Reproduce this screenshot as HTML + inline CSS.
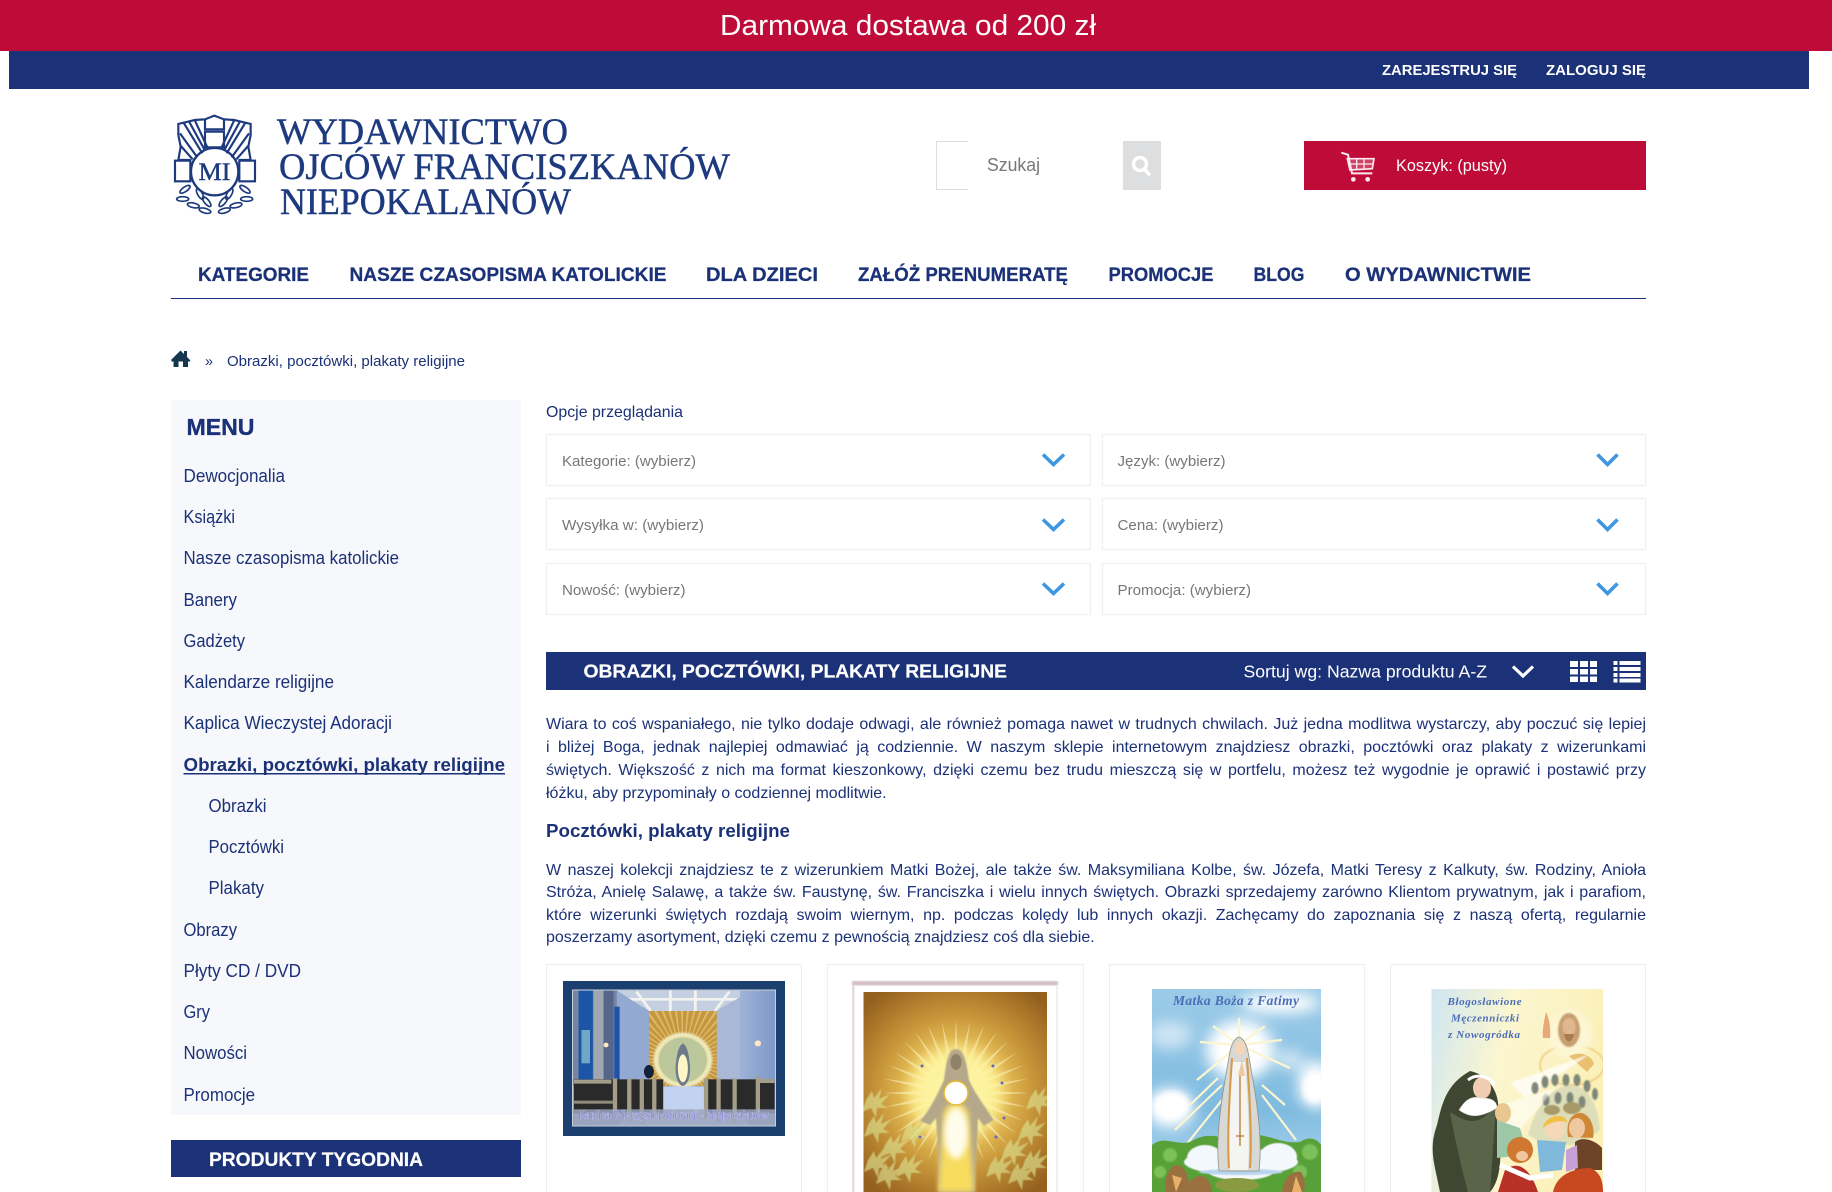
<!DOCTYPE html>
<html lang="pl"><head><meta charset="utf-8"><title>Obrazki, pocztówki, plakaty religijne</title>
<style>
html,body{margin:0;padding:0;background:#fff;width:1832px;height:1192px;overflow:hidden}
#p{position:relative;width:1832px;height:1192px;overflow:hidden}
svg{position:absolute;left:0;top:0;display:block;overflow:hidden}
text{font-family:"Liberation Sans",sans-serif}
.b{font-weight:700}
.w{fill:#fff}
.n{fill:#1b3178}
.g{fill:#777}
.m{font-size:18px;fill:#1b3178}
.nv{font-size:19.5px;font-weight:700;fill:#1b3178;stroke:#1b3178;stroke-width:.25px}
.f{font-size:15px;fill:#777}
.sf{font-family:"Liberation Serif",serif}
.ln{position:absolute;left:546px;width:1100px;height:22px;white-space:nowrap;text-align:justify;text-align-last:justify;font:16px/22px "Liberation Sans",sans-serif;color:#1b3178}
.l{text-align:left;text-align-last:left}
</style></head><body><div id="p">
<svg width="1832" height="1192" viewBox="0 0 1832 1192" xmlns="http://www.w3.org/2000/svg">
<defs>
<filter id="bl"><feGaussianBlur stdDeviation="0.7"/></filter>
<filter id="bs"><feGaussianBlur stdDeviation="0.45"/></filter>
<filter id="bl2"><feGaussianBlur stdDeviation="3"/></filter>
<filter id="bl3"><feGaussianBlur stdDeviation="7"/></filter>
<clipPath id="c1"><rect x="572.5" y="990" width="203" height="136"/></clipPath>
<clipPath id="cw"><rect x="305" y="183" width="190" height="225"/></clipPath>
<clipPath id="c2"><rect x="863.5" y="992" width="183.5" height="200"/></clipPath>
<clipPath id="c3"><rect x="1152" y="989" width="169" height="203"/></clipPath>
<clipPath id="c4"><rect x="1431.5" y="989" width="171.5" height="203"/></clipPath>
<linearGradient id="s4" x1="0" x2="1" y1="0" y2="0.3"><stop offset="0" stop-color="#cfe6f2"/><stop offset=".45" stop-color="#fbf6d0"/><stop offset="1" stop-color="#fbf0b8"/></linearGradient>
<linearGradient id="s3" x1="0" x2="0" y1="0" y2="1"><stop offset="0" stop-color="#9ccbe8"/><stop offset=".6" stop-color="#7fbbe0"/><stop offset="1" stop-color="#bcdcf0"/></linearGradient>
<linearGradient id="wl" x1="0" x2="1" y1="0" y2="0"><stop offset="0" stop-color="#9fb2d8"/><stop offset="1" stop-color="#7f98c8"/></linearGradient>
<radialGradient id="gold" gradientUnits="userSpaceOnUse" cx="956" cy="1093" r="125"><stop offset="0" stop-color="#fff7a0"/><stop offset=".32" stop-color="#eecb5e"/><stop offset=".62" stop-color="#c8963a"/><stop offset="1" stop-color="#94601e"/></radialGradient>
<polygon id="sp0" points="952,1093 960,1093 956,1020" fill="#f5e6ac" opacity=".7"/>
<g id="sp1"><use href="#sp0"/><use href="#sp0" transform="rotate(180 956 1093)"/></g>
<g id="sp2"><use href="#sp1"/><use href="#sp1" transform="rotate(90 956 1093)"/></g>
<g id="sp3"><use href="#sp2"/><use href="#sp2" transform="rotate(45 956 1093)"/></g>
<g id="sp4"><use href="#sp3"/><use href="#sp3" transform="rotate(22.5 956 1093)"/></g>
<g id="sp5"><use href="#sp4"/><use href="#sp4" transform="rotate(11.25 956 1093)"/></g>
<g id="lf"><ellipse cx="0" cy="0" rx="18" ry="7" fill="none" stroke="#1e3a7f" stroke-width="5"/></g>
<path id="pl" d="M0 0L6 -9L8 -2L16 -12L13 -1L24 -6L15 4L22 8L11 8L10 18L5 8L-4 12Z" fill="#dde494"/>
</defs>

<!-- top bars -->
<rect x="0" y="0" width="1832" height="51" fill="#bf0b38"/>
<rect x="9" y="51" width="1800" height="38" fill="#1b3178"/>
<text x="720" y="35" font-size="29" class="w" textLength="376" lengthAdjust="spacingAndGlyphs">Darmowa dostawa od 200 zł</text>
<text x="1382" y="75" font-size="15" class="w b" textLength="135" lengthAdjust="spacingAndGlyphs">ZAREJESTRUJ SIĘ</text>
<text x="1546" y="75" font-size="15" class="w b" textLength="100" lengthAdjust="spacingAndGlyphs">ZALOGUJ SIĘ</text>

<!-- logo emblem -->
<g transform="translate(160 100) scale(.3333)" fill="none" stroke="#1e3a7f" stroke-width="6.500">
<path d="M55 105L55 72L105 60L135 58L163 47L192 58L222 60L272 72L272 105L265 140L272 180L236 180M55 105L62 140L55 180L92 180"/>
<rect x="135" y="95" width="57" height="47"/>
<path d="M135 58V88H192V58"/>
<path d="M72 70L127 160M105 62L142 142M88 66L134 150M60 100L112 172M60 135L98 178M255 70L200 160M222 62L185 142M239 66L193 150M267 100L215 172M267 135L229 178"/>
<circle cx="164" cy="215" r="71" stroke-width="7"/>
<rect x="45" y="182" width="46" height="62"/><rect x="238" y="182" width="47" height="62"/>
<use href="#lf" transform="translate(75 268) rotate(-35)"/><use href="#lf" transform="translate(68 297)"/>
<use href="#lf" transform="translate(100 316) rotate(12)"/><use href="#lf" transform="translate(120 282) rotate(60)"/><use href="#lf" transform="translate(140 305) rotate(50)"/>
<use href="#lf" transform="translate(135 332) rotate(15)"/><use href="#lf" transform="translate(255 268) rotate(35)"/>
<use href="#lf" transform="translate(260 297)"/><use href="#lf" transform="translate(228 316) rotate(-12)"/><use href="#lf" transform="translate(208 282) rotate(-60)"/>
<use href="#lf" transform="translate(190 305) rotate(-50)"/><use href="#lf" transform="translate(193 332) rotate(-15)"/>
</g>
<text x="198.500" y="180" class="sf" font-size="25" fill="#1e3a7f" stroke="#1e3a7f" stroke-width=".4" textLength="32" lengthAdjust="spacingAndGlyphs">MI</text>
<g fill="#1e3a7f" stroke="#1e3a7f" stroke-width=".45" font-size="37">
<text x="277" y="144" class="sf" textLength="291" lengthAdjust="spacingAndGlyphs">WYDAWNICTWO</text>
<text x="279" y="179" class="sf" textLength="451" lengthAdjust="spacingAndGlyphs">OJCÓW FRANCISZKANÓW</text>
<text x="280" y="214" class="sf" textLength="291" lengthAdjust="spacingAndGlyphs">NIEPOKALANÓW</text>
</g>

<!-- search -->
<path d="M968 141.500H936.500V189.500H968" fill="none" stroke="#ddd"/>
<text x="987" y="171" font-size="18" class="g" textLength="53" lengthAdjust="spacingAndGlyphs">Szukaj</text>
<rect x="1123" y="141" width="38" height="49" fill="#dddee0"/>
<circle cx="1140" cy="164" r="6.500" fill="none" stroke="#fff" stroke-width="3.400"/>
<path d="M1144.500 169L1150 175.500" stroke="#fff" stroke-width="3.600"/>

<!-- cart -->
<rect x="1304" y="141" width="342" height="49" fill="#bf0b38"/>
<g transform="translate(1300 130) scale(.3333)" fill="none" stroke="#fde8ee" stroke-width="5">
<path d="M124 68L144 74L156 130H217" stroke-width="6"/>
<path d="M142 86H222L217 116L150 120Z" fill="#fde8ee" fill-opacity=".25"/>
<path d="M147 102H220M170 86V118M192 86V117" stroke-width="4"/>
<circle cx="160" cy="148" r="7" fill="#fde8ee" stroke="none"/><circle cx="203" cy="148" r="7" fill="#fde8ee" stroke="none"/>
</g>
<text x="1396" y="171" font-size="17" class="w" textLength="111" lengthAdjust="spacingAndGlyphs">Koszyk: (pusty)</text>

<!-- nav -->
<text x="198" y="281" class="nv" textLength="111" lengthAdjust="spacingAndGlyphs">KATEGORIE</text>
<text x="349.500" y="281" class="nv" textLength="317" lengthAdjust="spacingAndGlyphs">NASZE CZASOPISMA KATOLICKIE</text>
<text x="706" y="281" class="nv" textLength="112" lengthAdjust="spacingAndGlyphs">DLA DZIECI</text>
<text x="858" y="281" class="nv" textLength="210" lengthAdjust="spacingAndGlyphs">ZAŁÓŻ PRENUMERATĘ</text>
<text x="1108.500" y="281" class="nv" textLength="105" lengthAdjust="spacingAndGlyphs">PROMOCJE</text>
<text x="1253.500" y="281" class="nv" textLength="51" lengthAdjust="spacingAndGlyphs">BLOG</text>
<text x="1345" y="281" class="nv" textLength="186" lengthAdjust="spacingAndGlyphs">O WYDAWNICTWIE</text>
<rect x="171" y="298" width="1475" height="1" fill="#1b3178"/>

<!-- breadcrumb -->
<path d="M171 360L180.500 350.500L184 354V351H187V357L190.500 360.500L189 362L188 361V367H183V361.500H178.500V367H173.500V361L172.300 362Z" fill="#16384f"/>
<text x="205" y="366" font-size="15" class="n" textLength="8" lengthAdjust="spacingAndGlyphs">»</text>
<text x="227" y="366" font-size="15" class="n" textLength="238" lengthAdjust="spacingAndGlyphs">Obrazki, pocztówki, plakaty religijne</text>

<!-- sidebar -->
<rect x="171" y="400" width="350" height="715" fill="#f7f8fb"/>
<text x="186.500" y="435" font-size="23" class="b n" stroke="#1b3178" stroke-width=".35" textLength="68" lengthAdjust="spacingAndGlyphs">MENU</text>
<text x="183.500" y="482" class="m" textLength="101.500" lengthAdjust="spacingAndGlyphs">Dewocjonalia</text>
<text x="183.500" y="523" class="m" textLength="51.500" lengthAdjust="spacingAndGlyphs">Książki</text>
<text x="183.500" y="564" class="m" textLength="215.500" lengthAdjust="spacingAndGlyphs">Nasze czasopisma katolickie</text>
<text x="183.500" y="606" class="m" textLength="53.500" lengthAdjust="spacingAndGlyphs">Banery</text>
<text x="183.500" y="647" class="m" textLength="61.500" lengthAdjust="spacingAndGlyphs">Gadżety</text>
<text x="183.500" y="688" class="m" textLength="150.500" lengthAdjust="spacingAndGlyphs">Kalendarze religijne</text>
<text x="183.500" y="729" class="m" textLength="208.500" lengthAdjust="spacingAndGlyphs">Kaplica Wieczystej Adoracji</text>
<text x="183.500" y="771" class="m b" textLength="321.500" lengthAdjust="spacingAndGlyphs">Obrazki, pocztówki, plakaty religijne</text>
<rect x="183.500" y="773" width="321.500" height="1.500" fill="#1b3178"/>
<text x="208.500" y="812" class="m" textLength="58" lengthAdjust="spacingAndGlyphs">Obrazki</text>
<text x="208.500" y="853" class="m" textLength="75.500" lengthAdjust="spacingAndGlyphs">Pocztówki</text>
<text x="208.500" y="894" class="m" textLength="55.500" lengthAdjust="spacingAndGlyphs">Plakaty</text>
<text x="183.500" y="936" class="m" textLength="53.500" lengthAdjust="spacingAndGlyphs">Obrazy</text>
<text x="183.500" y="977" class="m" textLength="117.500" lengthAdjust="spacingAndGlyphs">Płyty CD / DVD</text>
<text x="183.500" y="1018" class="m" textLength="26.500" lengthAdjust="spacingAndGlyphs">Gry</text>
<text x="183.500" y="1059" class="m" textLength="63.500" lengthAdjust="spacingAndGlyphs">Nowości</text>
<text x="183.500" y="1101" class="m" textLength="71.500" lengthAdjust="spacingAndGlyphs">Promocje</text>
<rect x="171" y="1140" width="350" height="37" fill="#1b3178"/>
<text x="209" y="1166" font-size="19.500" class="b w" stroke="#fff" stroke-width=".2" textLength="214" lengthAdjust="spacingAndGlyphs">PRODUKTY TYGODNIA</text>

<!-- filters -->
<text x="546" y="417" font-size="16" class="n" textLength="137" lengthAdjust="spacingAndGlyphs">Opcje przeglądania</text>
<g fill="#fff" stroke="#f0f0f0" stroke-width="1.300">
<rect x="546.500" y="434.500" width="544" height="51"/><rect x="1102.500" y="434.500" width="543" height="51"/>
<rect x="546.500" y="498.500" width="544" height="51"/><rect x="1102.500" y="498.500" width="543" height="51"/>
<rect x="546.500" y="563.500" width="544" height="51"/><rect x="1102.500" y="563.500" width="543" height="51"/>
</g>
<text x="562" y="466" class="f" textLength="134" lengthAdjust="spacingAndGlyphs">Kategorie: (wybierz)</text>
<text x="1117.500" y="466" class="f" textLength="108" lengthAdjust="spacingAndGlyphs">Język: (wybierz)</text>
<text x="562" y="530" class="f" textLength="142" lengthAdjust="spacingAndGlyphs">Wysyłka w: (wybierz)</text>
<text x="1117.500" y="530" class="f" textLength="106" lengthAdjust="spacingAndGlyphs">Cena: (wybierz)</text>
<text x="562" y="595" class="f" textLength="123.500" lengthAdjust="spacingAndGlyphs">Nowość: (wybierz)</text>
<text x="1117.500" y="595" class="f" textLength="133.500" lengthAdjust="spacingAndGlyphs">Promocja: (wybierz)</text>
<g fill="none" stroke="#3f97e0" stroke-width="3.600">
<path d="M1043 454.500L1053.500 464.500L1064 454.500M1597.500 454.500L1607.500 464.500L1617.500 454.500"/>
<path d="M1043 519.500L1053.500 529.500L1064 519.500M1597.500 519.500L1607.500 529.500L1617.500 519.500"/>
<path d="M1043 583.500L1053.500 593.500L1064 583.500M1597.500 583.500L1607.500 593.500L1617.500 583.500"/>
</g>

<!-- title bar -->
<rect x="546" y="652" width="1100" height="38" fill="#1b3178"/>
<text x="583.500" y="677.500" font-size="18.500" class="b w" stroke="#fff" stroke-width=".2" textLength="423.500" lengthAdjust="spacingAndGlyphs">OBRAZKI, POCZTÓWKI, PLAKATY RELIGIJNE</text>
<text x="1243.500" y="677.500" font-size="17.500" class="w" textLength="243.500" lengthAdjust="spacingAndGlyphs">Sortuj wg: Nazwa produktu A-Z</text>
<path d="M1513 666.500L1523 676L1533 666.500" fill="none" stroke="#fff" stroke-width="3.200"/>
<g fill="#fff">
<rect x="1570" y="661" width="8" height="6"/><rect x="1580" y="661" width="8" height="6"/><rect x="1590" y="661" width="7" height="6"/>
<rect x="1570" y="669" width="8" height="5.500"/><rect x="1580" y="669" width="8" height="5.500"/><rect x="1590" y="669" width="7" height="5.500"/>
<rect x="1570" y="676.500" width="8" height="5.500"/><rect x="1580" y="676.500" width="8" height="5.500"/><rect x="1590" y="676.500" width="7" height="5.500"/>
<rect x="1613.500" y="661" width="4" height="4"/><rect x="1619.500" y="661" width="21" height="4"/>
<rect x="1613.500" y="667" width="4" height="4"/><rect x="1619.500" y="667" width="21" height="4"/>
<rect x="1613.500" y="673" width="4" height="4"/><rect x="1619.500" y="673" width="21" height="4"/>
<rect x="1613.500" y="678.500" width="4" height="4"/><rect x="1619.500" y="678.500" width="21" height="4"/>
</g>

<text x="546" y="837" font-size="18" class="b n" textLength="244" lengthAdjust="spacingAndGlyphs">Pocztówki, plakaty religijne</text>

<!-- cards -->
<path d="M546.500 1192V964.500H801.500V1192M827.500 1192V964.500H1083.500V1192M1109.500 1192V964.500H1364.500V1192M1390.500 1192V964.500H1645.500V1192" fill="none" stroke="#eee" stroke-width="1.200"/>

<!-- product 1: chapel -->
<rect x="563" y="981" width="222" height="155" fill="#1b4070"/>
<g clip-path="url(#c1)">
<g transform="translate(540 950) scale(.35714 .33333)" filter="url(#bs)">
<rect x="91" y="120" width="570" height="407" fill="#8ca2cc"/>
<polygon points="215,122 590,122 495,183 305,183" fill="#c4cfe2"/>
<path d="M270 125L310 183M365 122V183M435 122V183M530 125L490 183M240 148H555" stroke="#f2f2ee" stroke-width="8" fill="none"/>
<rect x="91" y="120" width="125" height="290" fill="#7686a2"/>
<polygon points="215,122 305,183 305,400 215,400" fill="#93a9d2"/>
<polygon points="590,122 495,183 495,400 590,400" fill="#a9b8d6"/>
<rect x="560" y="120" width="101" height="280" fill="url(#wl)"/>
<rect x="108" y="122" width="40" height="268" fill="#1c54a8"/>
<rect x="116" y="240" width="24" height="100" fill="#6ea8c4"/>
<rect x="150" y="122" width="28" height="268" fill="#a0a6b2"/>
<rect x="178" y="122" width="28" height="268" fill="#56668a"/>
<rect x="208" y="170" width="15" height="220" fill="#1c54a8"/>
<rect x="305" y="183" width="190" height="225" fill="#c4963c"/>
<g clip-path="url(#cw)"><circle cx="400" cy="330" r="120" fill="none" stroke="#dcb868" stroke-width="240" stroke-dasharray="5 9"/></g>
<circle cx="400" cy="330" r="82" fill="#efeac0" filter="url(#bl2)"/>
<circle cx="400" cy="330" r="70" fill="#bcc89c"/>
<circle cx="400" cy="330" r="70" fill="none" stroke="#e8e2a8" stroke-width="5"/>
<path d="M400 280C385 290 383 320 380 345C378 385 388 405 400 408C412 405 422 385 420 345C417 320 415 290 400 280Z" fill="#6e7a88"/>
<ellipse cx="400" cy="355" rx="14" ry="42" fill="#fff6c8"/>
<polygon points="345,410 460,410 590,527 215,527" fill="#c2d2f0"/>
<rect x="95" y="388" width="250" height="102" fill="#2a2a2c"/>
<rect x="460" y="388" width="197" height="102" fill="#2a2a2c"/>
<path d="M95 395H200M210 385V505M250 385V515M285 385V520M320 385V505M465 385V505M500 385V515M545 385V520M610 380V505M610 393H657" stroke="#a49e88" stroke-width="12" fill="none"/>
<rect x="95" y="452" width="110" height="9" fill="#8f8a78"/>
<rect x="95" y="478" width="565" height="49" fill="#9ca4bc" opacity=".85"/>
<ellipse cx="305" cy="365" rx="14" ry="20" fill="#16203a"/>
<g fill="#fce8c4"><circle cx="185" cy="285" r="7"/><circle cx="610" cy="280" r="9"/></g>
</g></g>
<rect x="572.500" y="990" width="203" height="136" fill="none" stroke="#c8d0d8"/>
<text x="578.500" y="1119" font-size="11.500" fill="#5c5cc8" stroke="#e4e4ff" stroke-width=".3" textLength="190" lengthAdjust="spacingAndGlyphs">Kaplica Wieczystej Adoracji - Niepokalanów</text>

<!-- product 2: golden Mary -->
<rect x="852" y="981" width="206" height="4.500" fill="#d4c0c6" filter="url(#bl)"/>
<rect x="852" y="985" width="2.500" height="207" fill="#e6dade"/>
<rect x="1056" y="985" width="2" height="207" fill="#f4eef0"/>
<g clip-path="url(#c2)">
<rect x="863.500" y="992" width="183.500" height="200" fill="url(#gold)"/>
<use href="#sp5"/>
<circle cx="956" cy="1093" r="46" fill="#fff6a0" opacity=".85" filter="url(#bl3)"/>
<g opacity=".62" filter="url(#bs)">
<use href="#pl" transform="translate(868 1125)"/><use href="#pl" transform="translate(885 1145)"/><use href="#pl" transform="translate(868 1160)"/><use href="#pl" transform="translate(900 1165)"/><use href="#pl" transform="translate(880 1172)"/><use href="#pl" transform="translate(905 1130)"/><use href="#pl" transform="translate(866 1100)"/>
<use href="#pl" transform="translate(1022 1128)"/><use href="#pl" transform="translate(1005 1148)"/><use href="#pl" transform="translate(1025 1160)"/><use href="#pl" transform="translate(990 1165)"/><use href="#pl" transform="translate(1012 1172)"/><use href="#pl" transform="translate(1030 1098)"/>
</g>
<path d="M956 1049C947 1049 946 1066 944 1080C936 1098 928 1112 920 1121L930 1125L936 1118C938 1145 938 1170 938 1192H975C976 1170 977 1145 978 1118L984 1126L993.500 1120C988 1110 976 1096 969 1080C967 1066 965 1049 956 1049Z" fill="#b5a88a" filter="url(#bl)"/>
<ellipse cx="956" cy="1062" rx="5.500" ry="8" fill="#8f8268"/>
<path d="M944 1112C950 1100 962 1100 968 1112L974 1192H938Z" fill="#ffe25a" opacity=".9" filter="url(#bl2)"/>
<ellipse cx="956" cy="1133" rx="12" ry="26" fill="#fffcec" filter="url(#bl2)"/>
<circle cx="956" cy="1093" r="12" fill="#fff" stroke="#e8b830" stroke-width="1.500"/>
<g fill="#6a68b8"><circle cx="922" cy="1066" r="1.500"/><circle cx="993" cy="1066" r="1.500"/><circle cx="1002" cy="1083" r="1.500"/><circle cx="1004" cy="1118" r="1.500"/><circle cx="920" cy="1137" r="1.500"/><circle cx="996" cy="1137" r="1.500"/></g>
</g>

<!-- product 3: Fatima -->
<g clip-path="url(#c3)">
<rect x="1152" y="989" width="169" height="203" fill="url(#s3)"/>
<g fill="#fff" filter="url(#bl3)">
<ellipse cx="1280" cy="1003" rx="40" ry="10"/><ellipse cx="1170" cy="1035" rx="22" ry="14" opacity=".55"/>
<ellipse cx="1316" cy="1085" rx="18" ry="24"/><ellipse cx="1170" cy="1108" rx="24" ry="20"/>
<ellipse cx="1240" cy="1050" rx="34" ry="30"/><ellipse cx="1290" cy="1060" rx="14" ry="10" opacity=".6"/>
</g>
<ellipse cx="1172" cy="1105" rx="17" ry="13" fill="#fff" filter="url(#bl2)"/>
<ellipse cx="1314" cy="1088" rx="11" ry="14" fill="#fff" filter="url(#bl2)"/>
<g stroke="#fbf6d0" stroke-width="2.200" fill="none">
<path d="M1239 1045L1239 1018M1239 1045L1265 1026M1239 1045L1213 1026M1239 1045L1282 1040M1239 1045L1200 1042M1239 1045L1290 1068M1239 1045L1197 1080M1218 1078L1190 1105M1222 1085L1175 1130M1222 1100L1186 1145M1262 1085L1285 1105M1262 1095L1296 1140"/>
</g>
<path d="M1152 1145C1165 1135 1175 1146 1190 1142C1210 1130 1215 1140 1240 1136C1265 1130 1280 1145 1300 1142C1310 1135 1318 1140 1321 1145V1192H1152Z" fill="#58a038"/>
<g fill="#7cc05a" filter="url(#bl)"><circle cx="1170" cy="1155" r="7"/><circle cx="1310" cy="1152" r="8"/><circle cx="1160" cy="1172" r="6"/><circle cx="1300" cy="1172" r="7"/></g>
<g fill="#f2f8fc" filter="url(#bs)">
<ellipse cx="1241" cy="1162" rx="57" ry="13"/><ellipse cx="1205" cy="1158" rx="18" ry="13"/><ellipse cx="1278" cy="1157" rx="19" ry="14"/><ellipse cx="1241" cy="1172" rx="32" ry="8"/>
</g>
<ellipse cx="1241" cy="1172" rx="42" ry="3" fill="#b8d4ec" filter="url(#bs)"/>
<path d="M1239 1037C1229 1040 1229 1062 1225 1080C1219 1115 1216 1145 1219 1171H1259C1262 1145 1259 1115 1253 1080C1249 1062 1249 1040 1239 1037Z" fill="#d8d8d4" stroke="#90908a" stroke-width=".8"/>
<path d="M1233 1062C1230 1100 1228 1140 1230 1170H1248C1250 1140 1248 1100 1245 1062Z" fill="#f4f4f0"/>
<ellipse cx="1240" cy="1048" rx="5" ry="7" fill="#f4d6b8"/>
<path d="M1232 1058C1229 1100 1227 1140 1229 1168M1247 1058C1250 1100 1252 1140 1250 1168" fill="none" stroke="#d49a48" stroke-width="2"/>
<path d="M1242 1060L1238 1076L1245 1076Z" fill="#f0c8a0"/>
<path d="M1240 1076V1130M1240 1130V1146M1236 1136H1244" stroke="#b87830" stroke-width="1.300"/>
<path d="M1166 1192C1163 1178 1170 1166 1176 1165C1186 1165 1190 1180 1190 1192ZM1186 1192C1188 1180 1195 1176 1200 1176C1208 1176 1212 1185 1212 1192ZM1282 1192C1284 1175 1295 1170 1301 1172C1307 1180 1304 1192 1304 1192Z" fill="#9a7040"/>
<path d="M1176 1192L1172 1175L1182 1178ZM1292 1192L1296 1176L1302 1192Z" fill="#e8b068"/>
<ellipse cx="1237" cy="1185" rx="22" ry="7" fill="#8a9a40"/>
</g>
<text x="1173" y="1005" font-size="13.500" font-style="italic" font-weight="700" fill="#4c6cb8" class="sf" textLength="126" lengthAdjust="spacing">Matka Boża z Fatimy</text>

<!-- product 4 -->
<g clip-path="url(#c4)">
<rect x="1431.500" y="989" width="171.500" height="203" fill="url(#s4)"/>
<ellipse cx="1572" cy="1065" rx="32" ry="20" fill="none" stroke="#f0c878" stroke-width="1.500" filter="url(#bl)"/>
<ellipse cx="1570" cy="1034" rx="22" ry="24" fill="#fdf6d4" filter="url(#bl2)"/>
<ellipse cx="1569" cy="1030" rx="11" ry="17" fill="#c8a070" filter="url(#bl)"/>
<ellipse cx="1569" cy="1027" rx="6.500" ry="9" fill="#e0b890" filter="url(#bl)"/>
<path d="M1564 1034C1566 1044 1572 1044 1574 1034Z" fill="#a87c50"/>
<path d="M1543 1038C1542 1028 1545 1018 1546 1012C1549 1018 1551 1028 1550 1038Z" fill="#e8a878"/>
<path d="M1569 1056C1582 1050 1592 1056 1594 1064L1587 1072Z" fill="#e8c070"/>
<path d="M1510 1083L1590 1054L1525 1098Z" fill="#fff" opacity=".75" filter="url(#bl)"/>
<path d="M1528 1135C1535 1105 1555 1085 1570 1085C1585 1085 1598 1100 1600 1130L1580 1145H1545Z" fill="#d4d8b8" opacity=".75" filter="url(#bl)"/>
<g fill="#7f8878" filter="url(#bl)">
<ellipse cx="1535" cy="1088" rx="3.500" ry="6"/><ellipse cx="1545" cy="1082" rx="3.500" ry="6"/><ellipse cx="1555" cy="1080" rx="3.500" ry="6"/><ellipse cx="1566" cy="1080" rx="3.500" ry="6"/><ellipse cx="1577" cy="1080" rx="3.500" ry="6"/><ellipse cx="1587" cy="1086" rx="3.500" ry="6"/><ellipse cx="1595" cy="1094" rx="3" ry="6"/><ellipse cx="1546" cy="1100" rx="3.500" ry="6"/><ellipse cx="1558" cy="1098" rx="3.500" ry="6"/><ellipse cx="1570" cy="1098" rx="3.500" ry="6"/><ellipse cx="1582" cy="1102" rx="3.500" ry="6"/>
</g>
<g fill="#a89a68" filter="url(#bs)"><ellipse cx="1552" cy="1110" rx="8" ry="5"/><ellipse cx="1572" cy="1108" rx="9" ry="6"/></g>
<path d="M1500 1105L1555 1088L1512 1140Z" fill="#fff" opacity=".55" filter="url(#bl)"/>
<path d="M1470 1071C1445 1085 1442 1105 1437 1125C1428 1150 1435 1165 1440 1192H1490C1505 1175 1500 1140 1498 1110C1500 1095 1490 1075 1470 1071Z" fill="#3f4732"/>
<path d="M1450 1112C1470 1125 1480 1125 1496 1105L1490 1192H1468C1462 1170 1455 1140 1450 1112Z" fill="#5a6448"/>
<ellipse cx="1482" cy="1088" rx="9" ry="11" fill="#f0ccb0"/>
<path d="M1459 1110C1468 1095 1475 1097 1482 1098C1490 1098 1497 1100 1497 1108C1480 1118 1470 1118 1459 1110Z" fill="#fff" stroke="#ccc" stroke-width=".5"/>
<path d="M1468 1080C1478 1072 1492 1078 1494 1085" stroke="#fff" stroke-width="3" fill="none"/>
<ellipse cx="1503" cy="1113" rx="8" ry="10" fill="#e8c890"/>
<path d="M1497 1120L1520 1128L1528 1155L1497 1158Z" fill="#9cc8a8"/>
<path d="M1498 1192L1505 1170C1518 1160 1530 1168 1538 1192Z" fill="#b83028"/>
<circle cx="1520" cy="1150" r="13" fill="#d07830"/>
<ellipse cx="1522" cy="1156" rx="6" ry="5" fill="#f0c8a0"/>
<path d="M1500 1165L1530 1178L1553 1175" stroke="#fff" stroke-width="5" fill="none"/>
<path d="M1537 1140L1566 1142L1562 1170L1540 1172Z" fill="#80b8dc"/>
<circle cx="1555" cy="1128" r="11" fill="#f4d8b8"/>
<path d="M1543 1128C1545 1115 1565 1112 1567 1122C1558 1120 1550 1122 1543 1128Z" fill="#f0c040"/>
<path d="M1568 1137C1565 1118 1575 1112 1582 1113C1592 1116 1595 1130 1593 1138Z" fill="#d08838"/>
<ellipse cx="1577" cy="1128" rx="8" ry="10" fill="#f0c8a0"/>
<path d="M1575 1142C1582 1136 1595 1140 1602 1148V1170H1575Z" fill="#6e4428"/>
<path d="M1553 1192C1556 1176 1572 1168 1590 1168C1600 1172 1603 1180 1603 1192Z" fill="#c84820"/>
<path d="M1566 1150L1577 1145L1578 1168L1566 1172Z" fill="#c8a0d8"/>
</g>
<g font-size="11" font-weight="700" font-style="italic" fill="#4c6cb8">
<text x="1447.500" y="1005" class="sf" textLength="74" lengthAdjust="spacing">Błogosławione</text>
<text x="1451" y="1021.500" class="sf" textLength="68" lengthAdjust="spacing">Męczenniczki</text>
<text x="1448" y="1038" class="sf" textLength="72" lengthAdjust="spacing">z Nowogródka</text>
</g>
</svg>

<div class="ln" style="top:714px">Wiara to coś wspaniałego, nie tylko dodaje odwagi, ale również pomaga nawet w trudnych chwilach. Już jedna modlitwa wystarczy, aby poczuć się lepiej</div>
<div class="ln" style="top:737px">i bliżej Boga, jednak najlepiej odmawiać ją codziennie. W naszym sklepie internetowym znajdziesz obrazki, pocztówki oraz plakaty z wizerunkami</div>
<div class="ln" style="top:759.500px">świętych. Większość z nich ma format kieszonkowy, dzięki czemu bez trudu mieszczą się w portfelu, możesz też wygodnie je oprawić i postawić przy</div>
<div class="ln l" style="top:782.500px">łóżku, aby przypominały o codziennej modlitwie.</div>
<div class="ln" style="top:859.500px">W naszej kolekcji znajdziesz te z wizerunkiem Matki Bożej, ale także św. Maksymiliana Kolbe, św. Józefa, Matki Teresy z Kalkuty, św. Rodziny, Anioła</div>
<div class="ln" style="top:881.500px">Stróża, Anielę Salawę, a także św. Faustynę, św. Franciszka i wielu innych świętych. Obrazki sprzedajemy zarówno Klientom prywatnym, jak i parafiom,</div>
<div class="ln" style="top:904.500px">które wizerunki świętych rozdają swoim wiernym, np. podczas kolędy lub innych okazji. Zachęcamy do zapoznania się z naszą ofertą, regularnie</div>
<div class="ln l" style="top:926.500px">poszerzamy asortyment, dzięki czemu z pewnością znajdziesz coś dla siebie.</div>
</div></body></html>
